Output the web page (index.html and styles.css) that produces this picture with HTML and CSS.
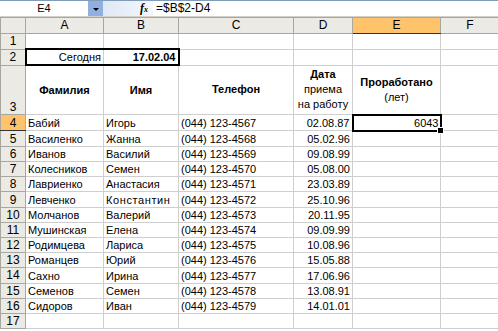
FILE: index.html
```html
<!DOCTYPE html>
<html>

<head>
    <meta charset="utf-8">
    <title>Книга1</title>
    <link rel="stylesheet" href="styles.css">
</head>

<body>

<div class="fbar">
    <div class="namebox">E4</div>
    <div class="dropbtn"><span class="tri"></span></div>
    <div class="fxzone"><i>f</i><i class="x">x</i></div>
    <div class="formula">=$B$2-D4</div>
</div>

<table class="sheet">
    <colgroup>
        <col class="c0">
        <col class="cA">
        <col class="cB">
        <col class="cC">
        <col class="cD">
        <col class="cE">
        <col class="cF">
    </colgroup>
    <tr class="hdr">
        <th class="corner"></th>
        <th>A</th>
        <th>B</th>
        <th>C</th>
        <th>D</th>
        <th class="act">E</th>
        <th>F</th>
    </tr>
    <tr class="r1">
        <th>1</th>
        <td></td><td></td><td></td><td></td><td></td><td></td>
    </tr>
    <tr class="r1">
        <th>2</th>
        <td class="r boxL">Сегодня</td>
        <td class="r b boxR">17.02.04</td>
        <td></td><td></td><td></td><td></td>
    </tr>
    <tr class="r3">
        <th class="bot">3</th>
        <td class="c b">Фамилия</td>
        <td class="c b">Имя</td>
        <td class="c b">Телефон</td>
        <td class="c"><b>Дата</b><br>приема<br>на работу</td>
        <td class="c"><b>Проработано</b><br>(лет)</td>
        <td></td>
    </tr>
    <tr class="rw">
        <th class="act">4</th>
        <td>Бабий</td><td>Игорь</td><td>(044) 123-4567</td><td class="r">02.08.87</td>
        <td class="r sel"><div class="selin">6043<span class="handle"></span></div></td><td></td>
    </tr>
    <tr class="rw">
        <th>5</th>
        <td>Василенко</td><td>Жанна</td><td>(044) 123-4568</td><td class="r">05.02.96</td><td></td><td></td>
    </tr>
    <tr class="rw">
        <th>6</th>
        <td>Иванов</td><td>Василий</td><td>(044) 123-4569</td><td class="r">09.08.99</td><td></td><td></td>
    </tr>
    <tr class="rw">
        <th>7</th>
        <td>Колесников</td><td>Семен</td><td>(044) 123-4570</td><td class="r">05.08.00</td><td></td><td></td>
    </tr>
    <tr class="rw">
        <th>8</th>
        <td>Лавриенко</td><td>Анастасия</td><td>(044) 123-4571</td><td class="r">23.03.89</td><td></td><td></td>
    </tr>
    <tr class="rw">
        <th>9</th>
        <td>Левченко</td><td class="wide">Константин</td><td>(044) 123-4572</td><td class="r">25.10.96</td><td></td><td></td>
    </tr>
    <tr class="rw">
        <th>10</th>
        <td>Молчанов</td><td>Валерий</td><td>(044) 123-4573</td><td class="r">20.11.95</td><td></td><td></td>
    </tr>
    <tr class="rw">
        <th>11</th>
        <td>Мушинская</td><td>Елена</td><td>(044) 123-4574</td><td class="r">09.09.99</td><td></td><td></td>
    </tr>
    <tr class="rw">
        <th>12</th>
        <td>Родимцева</td><td>Лариса</td><td>(044) 123-4575</td><td class="r">10.08.96</td><td></td><td></td>
    </tr>
    <tr class="rw">
        <th>13</th>
        <td>Романцев</td><td>Юрий</td><td>(044) 123-4576</td><td class="r">15.05.88</td><td></td><td></td>
    </tr>
    <tr class="rw">
        <th>14</th>
        <td>Сахно</td><td>Ирина</td><td>(044) 123-4577</td><td class="r">17.06.96</td><td></td><td></td>
    </tr>
    <tr class="rw">
        <th>15</th>
        <td>Семенов</td><td>Семен</td><td>(044) 123-4578</td><td class="r">13.08.91</td><td></td><td></td>
    </tr>
    <tr class="rw">
        <th>16</th>
        <td>Сидоров</td><td>Иван</td><td>(044) 123-4579</td><td class="r">14.01.01</td><td></td><td></td>
    </tr>
    <tr class="rw">
        <th>17</th>
        <td></td><td></td><td></td><td></td><td></td><td></td>
    </tr>
</table>

</body>

</html>
```

FILE: styles.css
```css
html,
body {
    margin: 0;
    padding: 0;
    background: #fff;
    overflow: hidden;
}

body {
    font-family: "Liberation Sans", Arial, sans-serif;
    font-size: 11px;
    color: #000;
}

/* formula bar */
.fbar {
    display: flex;
    height: 15px;
    border-top: 1px solid #7f9db9;
    border-bottom: 1px solid #d4d0c8;
    background: #fff;
    line-height: 15px;
}

.namebox {
    width: 88px;
    text-align: center;
}

.dropbtn {
    width: 15px;
    background: #8fb0e0;
    display: flex;
    align-items: center;
    justify-content: center;
}

.tri {
    width: 0;
    height: 0;
    border-left: 3px solid transparent;
    border-right: 3px solid transparent;
    border-top: 3px solid #000;
    margin-top: 2px;
}

.fxzone {
    width: 50px;
    background: linear-gradient(to right, #dfe8f6, #f4f7fc);
    text-align: right;
    padding-right: 5px;
    box-sizing: border-box;
    font-family: "Liberation Serif", serif;
    font-size: 12px;
    font-weight: bold;
}

.fxzone .x {
    font-size: 8px;
}

.formula {
    flex: 1;
    padding-left: 3px;
    font-size: 12px;
}

/* sheet */
.sheet {
    border-collapse: collapse;
    table-layout: fixed;
    width: 499px;
    border-top: 1px solid #d4d0c8;
}

.c0 { width: 25px; }
.cA { width: 78px; }
.cB { width: 75px; }
.cC { width: 115px; }
.cD { width: 59px; }
.cE { width: 88px; }
.cF { width: 59px; }

th {
    background: #ebeae4;
    border: 1px solid #a8a8a0;
    font-weight: normal;
    text-align: center;
    padding: 0;
    font-size: 12px;
}

th.act {
    background: #ffc36c;
    border-bottom-color: #333;
}

.hdr th {
    height: 15px;
    line-height: 15px;
}

td {
    border: 1px solid #cfcfcf;
    padding: 0 2px;
    white-space: nowrap;
    overflow: visible;
    vertical-align: bottom;
    line-height: 14px;
}

.r1 th,
.r1 td {
    height: 14px;
}

.r3 th,
.r3 td {
    height: 48px;
}

.r3 td {
    vertical-align: middle;
    line-height: 15px;
}

.rw th,
.rw td {
    height: 14.2px;
}

th.bot {
    vertical-align: bottom;
}

.r {
    text-align: right;
}

.c {
    text-align: center;
}

.b {
    font-weight: bold;
}

.wide {
    letter-spacing: 0.6px;
}

.boxL {
    border-top: 2px solid #000;
    border-bottom: 2px solid #000;
    border-left: 2px solid #000;
}

.boxR {
    border-top: 2px solid #000;
    border-bottom: 2px solid #000;
    border-right: 2px solid #000;
}

td.sel {
    border: 2px solid #000;
    padding: 0 1px;
}

.selin {
    position: relative;
}

.handle {
    position: absolute;
    right: -5px;
    bottom: -4px;
    width: 5px;
    height: 5px;
    background: #000;
    border: 1px solid #fff;
}
```
